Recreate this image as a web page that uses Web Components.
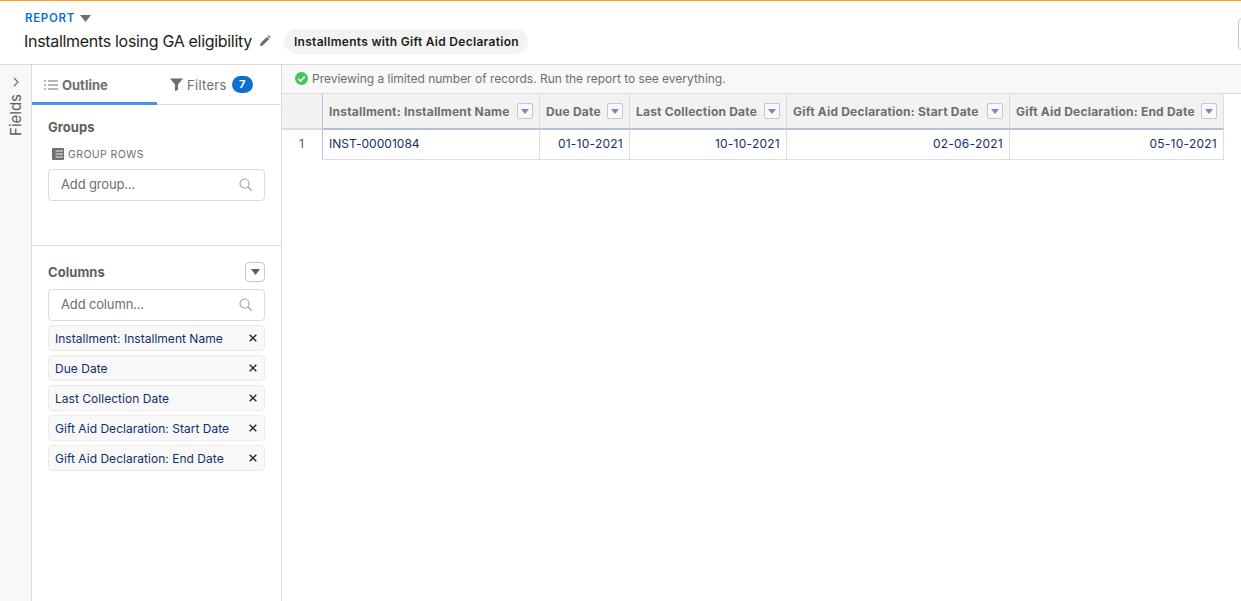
<!DOCTYPE html>
<html lang="en">
<head>
<meta charset="utf-8">
<title>Installments losing GA eligibility</title>
<style>
  html, body { margin: 0; height: 100%; overflow: hidden; background: #fff; }
  body { font-family: Inter, "Liberation Sans", sans-serif; color: #3e3e3c; }
  report-builder { height: 601px; }
</style>
</head>
<body>
<report-builder>
  <report-header slot="header" title="Installments losing GA eligibility" pill="Installments with Gift Aid Declaration"></report-header>
  <fields-rail slot="rail"></fields-rail>
  <side-panel slot="panel">
    <panel-section heading="Groups" style="height:141px">
      <group-label>GROUP ROWS</group-label>
      <search-box placeholder="Add group..."></search-box>
    </panel-section>
    <panel-section heading="Columns" menu style="padding-top:19px">
      <search-box placeholder="Add column..."></search-box>
      <column-chip>Installment: Installment Name</column-chip>
      <column-chip>Due Date</column-chip>
      <column-chip>Last Collection Date</column-chip>
      <column-chip>Gift Aid Declaration: Start Date</column-chip>
      <column-chip>Gift Aid Declaration: End Date</column-chip>
    </panel-section>
  </side-panel>
  <preview-table slot="main"></preview-table>
</report-builder>

<script>
class ReportBuilder extends HTMLElement {
  constructor() {
    super();
    this.attachShadow({ mode: 'open' });
    this.shadowRoot.innerHTML = `
      <style>
        :host {
          display: grid;
          grid-template-columns: 32px 250px 1fr;
          grid-template-rows: 65px 1fr;
        }
        .top { grid-column: 1 / -1; }
      </style>
      <div class="top"><slot name="header"></slot></div>
      <slot name="rail"></slot>
      <slot name="panel"></slot>
      <slot name="main"></slot>
    `;
  }
}

class ReportHeader extends HTMLElement {
  constructor() {
    super();
    this.attachShadow({ mode: 'open' });
    this.shadowRoot.innerHTML = `
      <style>
        :host {
          display: block;
          position: relative;
          box-sizing: border-box;
          height: 65px;
          padding: 11px 0 0 24px;
          border-top: 1px solid #ff9a1e;
          border-bottom: 1px solid #dddbda;
        }
        .kicker {
          display: flex;
          align-items: center;
          gap: 5px;
          height: 12px;
          margin-left: 1px;
          color: #0f6fd1;
          font-size: 11.5px;
          font-weight: 600;
          letter-spacing: .7px;
        }
        .row { display: flex; align-items: center; margin-top: 4px; height: 26px; }
        h1 { margin: 0; font-size: 16px; font-weight: 400; color: #1d1d1b; letter-spacing: -.31px; white-space: nowrap; }
        .edit { margin-left: 7px; display: block; }
        .pill {
          margin-left: 13px;
          height: 25px;
          line-height: 25px;
          padding: 0 9px 0 10px;
          border-radius: 13px;
          background: #f3f3f3;
          color: #1d1d1b;
          font-size: 12px;
          font-weight: 600;
          letter-spacing: .29px;
          white-space: nowrap;
        }
        .cut {
          position: absolute;
          top: 17px;
          right: -12px;
          width: 13px;
          height: 30px;
          border: 1px solid #c9c7c5;
          border-radius: 4px;
        }
      </style>
      <div class="kicker">REPORT
        <svg width="11" height="7" viewBox="0 0 11 7"><path d="M0 0h11L5.500 7z" fill="#706e6b"/></svg>
      </div>
      <div class="row">
        <h1></h1>
        <svg class="edit" width="12" height="12" viewBox="0 0 13 13">
          <path d="M1 12l.6-3L8.700 1.900l2.400 2.400L4 11.400zM9.400 1.200l.6-.6c.3-.3.7-.3 1 0l1.400 1.400c.3.3.3.7 0 1l-.6.6z" fill="#706e6b"/>
        </svg>
        <div class="pill"></div>
      </div>
      <div class="cut"></div>
    `;
  }

  connectedCallback() {
    this.shadowRoot.querySelector('h1').textContent = this.getAttribute('title');
    this.shadowRoot.querySelector('.pill').textContent = this.getAttribute('pill');
  }
}

class FieldsRail extends HTMLElement {
  constructor() {
    super();
    this.attachShadow({ mode: 'open' });
    this.shadowRoot.innerHTML = `
      <style>
        :host {
          display: flex;
          flex-direction: column;
          align-items: center;
          box-sizing: border-box;
          width: 32px;
          padding: 12px 0 0 0;
          background: #f8f8f8;
          border-right: 1px solid #dddbda;
        }
        svg { display: block; }
        span {
          margin-top: 7px;
          writing-mode: vertical-rl;
          transform: rotate(180deg);
          font-size: 15px;
          color: #5f5e5c;
        }
      </style>
      <svg width="8" height="10" viewBox="0 0 8 10"><path d="M2 1l4 4-4 4" fill="none" stroke="#706e6b" stroke-width="1.200"/></svg>
      <span>Fields</span>
    `;
  }
}

class SidePanel extends HTMLElement {
  constructor() {
    super();
    this.attachShadow({ mode: 'open' });
    this.shadowRoot.innerHTML = `
      <style>
        :host {
          display: block;
          box-sizing: border-box;
          width: 250px;
          border-right: 1px solid #dddbda;
        }
        .tabs { display: flex; height: 40px; border-bottom: 1px solid #dddbda; box-sizing: border-box; }
        .tab {
          display: flex;
          align-items: center;
          font-size: 13px;
          color: #706e6b;
          box-sizing: border-box;
        }
        .outline {
          width: 125px;
          padding: 2px 0 0 12px;
          gap: 4px;
          font-weight: 700;
          border-bottom: 3px solid #4a90ed;
          height: 40px;
        }
        .filters { padding-left: 13px; gap: 4px; letter-spacing: .3px; }
        .badge {
          margin-left: 1px;
          width: 21px;
          height: 17px;
          line-height: 17px;
          border-radius: 9px;
          background: #0f6fd1;
          color: #fff;
          font-size: 11px;
          font-weight: 700;
          text-align: center;
        }
      </style>
      <div class="tabs">
        <div class="tab outline">
          <svg width="14" height="10" viewBox="0 0 14 10"><path d="M0 1h2M4 1h10M0 5h2M4 5h10M0 9h2M4 9h10" stroke="#706e6b" stroke-width="1.200"/></svg>
          Outline
        </div>
        <div class="tab filters">
          <svg width="13" height="13" viewBox="0 0 13 13"><path d="M0 .5h13L8 6.500V12L5 13V6.500z" fill="#706e6b"/></svg>
          Filters
          <span class="badge">7</span>
        </div>
      </div>
      <slot></slot>
    `;
  }
}

class PanelSection extends HTMLElement {
  constructor() {
    super();
    this.attachShadow({ mode: 'open' });
    this.shadowRoot.innerHTML = `
      <style>
        :host {
          display: block;
          box-sizing: border-box;
          padding: 15px 16px 0;
        }
        :host(:not(:last-child)) { border-bottom: 1px solid #dddbda; }
        .head { display: flex; justify-content: space-between; align-items: center; height: 14px; }
        h2 { margin: 0; font-size: 13px; font-weight: 700; color: #5f5e5c; letter-spacing: .05px; }
        .menu {
          display: none;
          box-sizing: border-box;
          width: 20px;
          height: 20px;
          border: 1px solid #c9c7c5;
          border-radius: 4px;
          align-items: center;
          justify-content: center;
        }
        :host([menu]) .menu { display: flex; }
      </style>
      <div class="head">
        <h2></h2>
        <div class="menu"><svg width="9" height="6" viewBox="0 0 9 6"><path d="M0 0h9L4.500 6z" fill="#5f5e5c"/></svg></div>
      </div>
      <slot></slot>
    `;
  }

  connectedCallback() {
    this.shadowRoot.querySelector('h2').textContent = this.getAttribute('heading');
  }
}

class GroupLabel extends HTMLElement {
  constructor() {
    super();
    this.attachShadow({ mode: 'open' });
    this.shadowRoot.innerHTML = `
      <style>
        :host {
          display: flex;
          align-items: center;
          gap: 4px;
          height: 14px;
          margin: 13px 0 8px 4px;
          font-size: 10.500px;
          letter-spacing: .4px;
          color: #706e6b;
        }
      </style>
      <svg width="12" height="12" viewBox="0 0 12 12">
        <path d="M1 0h10a1 1 0 0 1 1 1v10a1 1 0 0 1-1 1H1a1 1 0 0 1-1-1V1a1 1 0 0 1 1-1z" fill="#706e6b"/>
        <path d="M3.500 3h7.500M3.500 6h7.500M3.500 9h7.500" stroke="#fff" stroke-width=".9"/>
      </svg>
      <slot></slot>
    `;
  }
}

class SearchBox extends HTMLElement {
  constructor() {
    super();
    this.attachShadow({ mode: 'open' });
    this.shadowRoot.innerHTML = `
      <style>
        :host {
          display: flex;
          align-items: center;
          justify-content: space-between;
          box-sizing: border-box;
          height: 32px;
          padding: 0 12px 2px;
          border: 1px solid #dddbda;
          border-radius: 4px;
          font-size: 13px;
          letter-spacing: -.15px;
          color: #706e6b;
          background: #fff;
        }
        svg { display: block; }
      </style>
      <span></span>
      <svg width="13" height="13" viewBox="0 0 13 13">
        <circle cx="5.500" cy="5.500" r="4.500" fill="none" stroke="#a8a7a5" stroke-width="1.200"/>
        <path d="M8.800 8.800L12.500 12.500" stroke="#a8a7a5" stroke-width="1.500"/>
      </svg>
    `;
  }

  connectedCallback() {
    this.shadowRoot.querySelector('span').textContent = this.getAttribute('placeholder');
    if (this.getAttribute('placeholder') === 'Add column...') {
      this.style.marginTop = '10px';
      this.style.marginBottom = '4px';
    }
  }
}

class ColumnChip extends HTMLElement {
  constructor() {
    super();
    this.attachShadow({ mode: 'open' });
    this.shadowRoot.innerHTML = `
      <style>
        :host {
          display: flex;
          align-items: center;
          justify-content: space-between;
          box-sizing: border-box;
          height: 26px;
          margin-bottom: 4px;
          padding: 0 7px 0 6px;
          background: #f8f8f8;
          border: 1px solid #ecebea;
          border-radius: 4px;
          font-size: 12px;
          letter-spacing: .03px;
          color: #12306b;
        }
        svg { display: block; }
      </style>
      <slot></slot>
      <svg width="8" height="8" viewBox="0 0 8 8"><path d="M.7.7l6.600 6.600M7.300.7L.7 7.300" stroke="#2b2b2b" stroke-width="1.500"/></svg>
    `;
  }
}

const COLUMNS = [
  { name: 'Installment: Installment Name', value: 'INST-00001084', width: 217, left: true },
  { name: 'Due Date', value: '01-10-2021', width: 90 },
  { name: 'Last Collection Date', value: '10-10-2021', width: 157 },
  { name: 'Gift Aid Declaration: Start Date', value: '02-06-2021', width: 223 },
  { name: 'Gift Aid Declaration: End Date', value: '05-10-2021', width: 214 }
];

class PreviewTable extends HTMLElement {
  constructor() {
    super();
    this.attachShadow({ mode: 'open' });
    const widths = COLUMNS.map(c => c.width + 'px').join(' ');
    const heads = COLUMNS.map(c => `
      <div class="th"><span>${c.name}</span>
        <i><svg width="8" height="5" viewBox="0 0 8 5"><path d="M0 0h8L4 5z" fill="#6f8fb8"/></svg></i>
      </div>`).join('');
    const cells = COLUMNS.map(c => `<div class="td ${c.left ? 'left' : ''}">${c.value}</div>`).join('');
    this.shadowRoot.innerHTML = `
      <style>
        :host { display: block; min-width: 0; }
        .notice {
          display: flex;
          align-items: center;
          gap: 4px;
          box-sizing: border-box;
          height: 29px;
          padding: 0 0 1px 13px;
          background: #f8f8f8;
          border-bottom: 1px solid #dddbda;
          font-size: 12px;
          color: #706e6b;
          letter-spacing: -.02px;
        }
        .grid {
          display: grid;
          grid-template-columns: 41px ${widths};
          grid-template-rows: 36px 30px;
          width: max-content;
        }
        .corner, .th {
          box-sizing: border-box;
          background: #f2f2f2;
          border-bottom: 2px solid #b3c2d6;
          border-right: 1px solid #d8dde6;
        }
        .corner { border-right-color: #b3c2d6; border-bottom-color: #dddbda; }
        .th {
          display: flex;
          align-items: center;
          justify-content: space-between;
          padding: 0 6px 0 6px;
          font-size: 12px;
          font-weight: 700;
          letter-spacing: .2px;
          color: #706e6b;
          white-space: nowrap;
        }
        .th i {
          display: flex;
          align-items: center;
          justify-content: center;
          box-sizing: border-box;
          width: 16px;
          height: 16px;
          border: 1px solid #c9c7c5;
          border-radius: 2px;
          background: #f8f8f8;
        }
        .num, .td {
          box-sizing: border-box;
          border-bottom: 1px solid #d8dde6;
          border-right: 1px solid #d8dde6;
          font-size: 12px;
          line-height: 27px;
        }
        .num {
          padding-right: 18px;
          text-align: right;
          color: #5f5e5c;
          border-right-color: #b3c2d6;
          border-bottom-color: transparent;
        }
        .td { padding: 0 6px; text-align: right; color: #12306b; letter-spacing: .25px; }
        .td.left { text-align: left; letter-spacing: .03px; }
      </style>
      <div class="notice">
        <svg width="13" height="13" viewBox="0 0 13 13">
          <circle cx="6.500" cy="6.500" r="6.500" fill="#45c65a"/>
          <path d="M3.300 6.800l2.200 2.200 4.200-4.400" fill="none" stroke="#fff" stroke-width="1.600"/>
        </svg>
        Previewing a limited number of records. Run the report to see everything.
      </div>
      <div class="grid">
        <div class="corner"></div>${heads}
        <div class="num">1</div>${cells}
      </div>
    `;
  }
}

customElements.define('report-builder', ReportBuilder);
customElements.define('report-header', ReportHeader);
customElements.define('fields-rail', FieldsRail);
customElements.define('side-panel', SidePanel);
customElements.define('panel-section', PanelSection);
customElements.define('group-label', GroupLabel);
customElements.define('search-box', SearchBox);
customElements.define('column-chip', ColumnChip);
customElements.define('preview-table', PreviewTable);
</script>
</body>
</html>
